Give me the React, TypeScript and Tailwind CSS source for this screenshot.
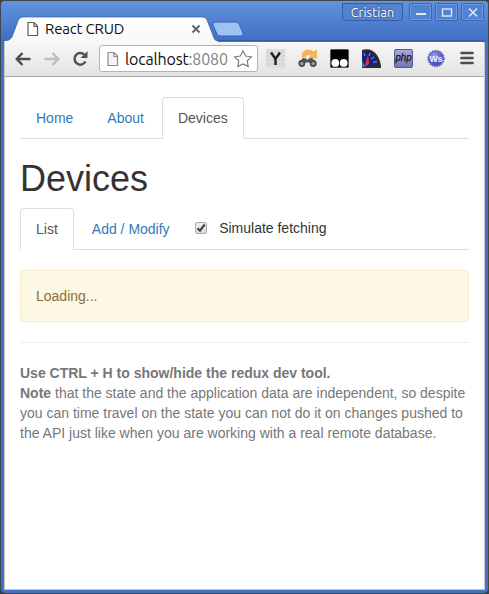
import React from "react";

const uiFont = "font-['Ubuntu','Noto_Sans',sans-serif]";

function PageIcon({ muted = false }: { muted?: boolean }) {
  return (
    <svg width="12" height="16" viewBox="0 0 12 16" className="shrink-0">
      <path
        d="M1 1.5H7L10.5 5V14.5H1ZM7 1.5V5.5H10.5"
        fill={muted ? "#f4f4f4" : "#fff"}
        stroke={muted ? "#8a8a8a" : "#5c5c5c"}
        strokeWidth="1.2"
      />
    </svg>
  );
}

function WindowButton({ children }: { children: React.ReactNode }) {
  return (
    <div className="flex h-[18px] w-[23px] items-center justify-center rounded-[2px] border border-[#3a65b4] bg-[#5282d3] shadow-[inset_0_0_0_1px_#6f99df]">
      <svg width="12" height="11" viewBox="0 0 12 11" fill="none" stroke="#e4e9f0" strokeWidth="1.8">
        {children}
      </svg>
    </div>
  );
}

function TitleBar() {
  return (
    <div className="relative h-[41px] bg-linear-to-b from-[#6293dc] to-[#3f6dc4]">
      <svg className="absolute -top-px left-0" width="489" height="42" viewBox="0 0 489 42">
        <defs>
          <linearGradient id="tab" x1="0" y1="0" x2="0" y2="1">
            <stop offset="0" stopColor="#fff" />
            <stop offset="1" stopColor="#f8f8f8" />
          </linearGradient>
        </defs>
        <path
          d="M4 42V41Q10 41 12 37L18 21Q19 17 23 17H202Q206 17 207 20L214 38Q215 41 218 41V42Z"
          fill="url(#tab)"
        />
        <path d="M4 41Q10 41 12 37L18 21Q19 17 23 17H202Q206 17 207 20L214 38Q215 41 218 41" fill="none" stroke="#365da7" strokeWidth="0.7" />
        <path d="M215 22H236Q238 22 239 24L243 33Q244 36 241 36H221Q218 36 217 34L213 25Q212 22 215 22Z" fill="#9cc3f3" stroke="#3b63ae" />
        <path d="M218 40.5H481Q485 40.5 485 43" fill="none" stroke="#355da9" />
      </svg>
      <div className="relative flex h-full items-start">
        <div className={`flex items-center pl-[27px] pt-[19px] text-[15px] leading-[18px] text-[#111] ${uiFont}`}>
          <PageIcon />
          <span className="ml-[6px] w-[80px] whitespace-nowrap tracking-[-.17px]">React CRUD</span>
          <svg className="ml-[66px]" width="10" height="10" viewBox="0 0 10 10" stroke="#606060" strokeWidth="1.8">
            <path d="M1.5 1.5L8.5 8.5M8.5 1.5L1.5 8.5" />
          </svg>
        </div>
        <div className="ml-auto flex pr-[5px] pt-[2px]">
          <div className={`mr-[6px] flex h-[18px] w-[61px] items-center justify-center rounded-b-[4px] border border-[#345da9] bg-[#5583cf] text-[12.5px] tracking-[.15px] text-white [text-shadow:0_0_2px_#172d59] ${uiFont}`}>
            Cristian
          </div>
          <div className="flex gap-[3px]">
            <WindowButton><path d="M1 7H11" /></WindowButton>
            <WindowButton><rect x="1.5" y="2" width="9" height="7" strokeWidth="1.4" /></WindowButton>
            <WindowButton><path d="M2 1.5L10 9.5M10 1.5L2 9.5" strokeWidth="1.6" /></WindowButton>
          </div>
        </div>
      </div>
    </div>
  );
}

function Extensions() {
  return (
    <div className="-mt-px ml-[8px] flex items-center gap-[13px]">
      <svg width="19" height="19" viewBox="0 0 19 19">
        <rect width="19" height="19" fill="#dedede" />
        <path d="M0 3H19M0 7H19M0 11H19M0 15H19" stroke="#c8c8c8" strokeDasharray="2 1" />
        <path d="M5 3.5L9.5 10L14 3.5M9.5 9.5V16" fill="none" stroke="#18202a" strokeWidth="2.4" />
      </svg>
      <svg width="19" height="19" viewBox="0 0 19 19">
        <path d="M4 8Q4 1 10 1Q13.5 1 15.5 3L18.5 1V9H11L13.5 6.5Q9 4 7.5 8Z" fill="#fcb452" stroke="#f2a03d" strokeWidth=".6" />
        <path d="M1 13L5 9L8 9.5L9.5 11L11 9.5L14 9L18 13L16 16L11 13.5H8L3 16Z" fill="#555" />
        <circle cx="3.8" cy="14.5" r="2.6" fill="#999" stroke="#4b4b4b" strokeWidth="1.7" />
        <circle cx="15.2" cy="14.5" r="2.6" fill="#999" stroke="#4b4b4b" strokeWidth="1.7" />
      </svg>
      <svg width="19" height="19" viewBox="0 0 19 19">
        <rect x=".5" y=".5" width="18" height="18" rx="1" fill="#000" stroke="#555" />
        <circle cx="5.3" cy="13.9" r="3.9" fill="#fff" />
        <circle cx="13.7" cy="13.9" r="3.9" fill="#fff" />
      </svg>
      <svg width="19" height="19" viewBox="0 0 19 19">
        <path d="M0 1Q9-2 15 6Q19 12 19 19H0Z" fill="#292b2d" />
        <path d="M0 3Q7 1 12 7Q16 12 16 17H0Z" fill="#17237b" />
        <path d="M2 4L3 7M8 4L7 7M12 8L9 10M15 13L11 13" stroke="#8fa3e4" />
        <path d="M3 16L6 6L7 14L5 17Z" fill="#f32938" />
        <path d="M0 12L4 18H0Z" fill="#4566bd" />
      </svg>
      <svg width="19" height="19" viewBox="0 0 19 19">
        <defs>
          <linearGradient id="php" x1="0" y1="0" x2="0" y2="1">
            <stop stopColor="#a8a9dd" /><stop offset="1" stopColor="#7375b7" />
          </linearGradient>
        </defs>
        <rect x=".5" y=".5" width="18" height="18" rx="1.5" fill="url(#php)" stroke="#575991" />
        <text x="9.5" y="12" textAnchor="middle" textLength="16" lengthAdjust="spacingAndGlyphs" fontSize="10" fontStyle="italic" fontFamily="Liberation Sans, sans-serif" fill="#111" stroke="#111" strokeWidth=".25">php</text>
      </svg>
      <svg width="19" height="19" viewBox="0 0 19 19">
        <defs>
          <radialGradient id="ws" cx=".4" cy=".3">
            <stop stopColor="#9a9ced" /><stop offset="1" stopColor="#5053c0" />
          </radialGradient>
        </defs>
        <circle cx="10" cy="9.5" r="7.8" fill="url(#ws)" stroke="#6264ca" strokeWidth="1.8" strokeDasharray="1.5 1" />
        <text x="10" y="13" textAnchor="middle" textLength="13" lengthAdjust="spacingAndGlyphs" fontSize="9" fontWeight="bold" fontFamily="Liberation Sans, sans-serif" fill="#f4f4ff">Ws</text>
      </svg>
    </div>
  );
}

function Toolbar() {
  return (
    <div className="flex h-[36px] items-center rounded-tr-[3px] border-b border-[#a9a9a9] bg-linear-to-b from-[#f8f8f8] to-[#e3e3e3] pl-[10px]">
      <svg width="16" height="16" viewBox="0 0 16 16" fill="none" stroke="#4d4d4d" strokeWidth="2.5">
        <path d="M7.5 2L1.8 8L7.5 14M2 8H15.5" />
      </svg>
      <svg className="ml-[13px]" width="16" height="16" viewBox="0 0 16 16" fill="none" stroke="#bdbdbd" strokeWidth="2.5">
        <path d="M8.5 2L14.2 8L8.5 14M14 8H.5" />
      </svg>
      <svg className="ml-[12px]" width="17" height="16" viewBox="0 0 17 16" fill="none" stroke="#505050" strokeWidth="2.5">
        <path d="M13.5 10.5A5.8 5.8 0 1 1 12 3.3" />
        <path d="M15.5 0V7H8.5Z" fill="#505050" stroke="none" />
      </svg>
      <div className="ml-[10px] flex h-[27px] w-[159px] shrink-0 items-center rounded-[3px] border border-[#b4b4b4] bg-white pl-[7px]">
        <PageIcon muted />
        <span className={`ml-[6px] w-[104px] whitespace-nowrap text-[16px] leading-[24px] tracking-[-.17px] text-[#111] ${uiFont}`}>
          localhost<span className="text-[#808080]">:8080</span>
        </span>
        <svg className="ml-[4px] shrink-0" width="20" height="20" viewBox="0 0 20 20">
          <path d="M10 1.7L12.6 7L18.4 7.8L14.2 11.8L15.2 17.6L10 14.9L4.8 17.6L5.8 11.8L1.6 7.8L7.4 7Z" fill="#fff" stroke="#777" strokeWidth="1.1" />
        </svg>
      </div>
      <Extensions />
      <svg className="-mt-px ml-[15px]" width="14" height="14" viewBox="0 0 14 14">
        <path d="M1.5 2H12.5M1.5 7H12.5M1.5 12H12.5" stroke="#4e4e4e" strokeWidth="2.7" strokeLinecap="round" />
      </svg>
    </div>
  );
}

function NavTab({ active = false, children }: { active?: boolean; children: React.ReactNode }) {
  return (
    <a className={`-mb-px mr-[2px] block h-[42px] whitespace-nowrap rounded-t-[4px] border px-[15px] py-[10px] ${active ? "border-[#ddd] border-b-white bg-white text-[#555]" : "border-transparent text-[#337ab7]"}`}>
      {children}
    </a>
  );
}

function Page() {
  return (
    <main className="flex-1 bg-white px-[15px] pt-[20px] font-['Liberation_Sans',Arial,sans-serif] text-[14px] leading-[20px] text-[#333]">
      <nav className="flex h-[42px] border-b border-[#ddd]">
        <NavTab>Home</NavTab>
        <NavTab>About</NavTab>
        <NavTab active>Devices</NavTab>
      </nav>
      <h1 className="mb-[10px] mt-[20px] h-[39px] text-[36px] font-normal leading-[39px]">Devices</h1>
      <div className="flex h-[42px] border-b border-[#ddd]">
        <NavTab active>List</NavTab>
        <NavTab>Add / Modify</NavTab>
        <label className="flex h-[40px] items-center pl-[7px]">
          <span className="flex size-[12px] items-center justify-center rounded-[2px] border border-[#aaa] bg-linear-to-b from-[#eee] to-[#ddd]">
            <svg width="10" height="10" viewBox="0 0 10 10" className="shrink-0">
              <path d="M1.5 5.2L4 7.7L8.7 1.5" fill="none" stroke="#404040" strokeWidth="2.1" />
            </svg>
          </span>
          <span className="ml-[12.5px]">Simulate fetching</span>
        </label>
      </div>
      <div className="mt-[20px] h-[52px] rounded-[4px] border border-[#faebcc] bg-[#fcf8e3] p-[15px] text-[#8a6d3b]">Loading...</div>
      <hr className="my-[20px] border-[#eee]" />
      <p className="whitespace-nowrap text-[#777]">
        <strong>Use CTRL + H to show/hide the redux dev tool.</strong><br />
        <strong>Note</strong> that the state and the application data are independent, so despite<br />
        you can time travel on the state you can not do it on changes pushed to<br />
        the API just like when you are working with a real remote database.
      </p>
    </main>
  );
}

export default function App() {
  return (
    <div className="h-[594px] w-[489px] overflow-hidden bg-[#404040]">
      <div className="flex h-[593px] w-full flex-col overflow-hidden rounded-[5px] border-x border-t border-[#414750] bg-[#4373c8]">
        <div className="-mx-px -mt-px border-t border-[#3d4857]"><div className="-mb-px"><TitleBar /></div></div>
        <div className="mx-[3px] mb-[3px] flex flex-1 flex-col border-x border-b border-[#c8c9c7]">
          <Toolbar />
          <Page />
        </div>
      </div>
    </div>
  );
}
